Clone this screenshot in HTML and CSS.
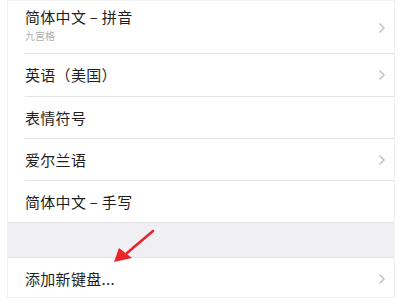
FILE: index.html
```html
<!DOCTYPE html>
<html lang="zh">
<head>
<meta charset="utf-8">
<link rel="stylesheet" href="styles.css">
</head>
<body>
<div class="screen">
  <div class="group">
    <div class="row row-tall">
      <div class="texts">
        <div class="title">简体中文 – 拼音</div>
        <div class="sub">九宫格</div>
      </div>
      <svg class="chev" width="8" height="12" viewBox="0 0 8 12"><path d="M1.5 1.5 L6 6 L1.5 10.5" fill="none" stroke="#c3c3c8" stroke-width="1.6"/></svg>
    </div>
    <div class="row row-2">
      <div class="title">英语（美国）</div>
      <svg class="chev" width="8" height="12" viewBox="0 0 8 12"><path d="M1.5 1.5 L6 6 L1.5 10.5" fill="none" stroke="#c3c3c8" stroke-width="1.6"/></svg>
    </div>
    <div class="row">
      <div class="title">表情符号</div>
    </div>
    <div class="row">
      <div class="title">爱尔兰语</div>
      <svg class="chev" width="8" height="12" viewBox="0 0 8 12"><path d="M1.5 1.5 L6 6 L1.5 10.5" fill="none" stroke="#c3c3c8" stroke-width="1.6"/></svg>
    </div>
    <div class="row last">
      <div class="title">简体中文 – 手写</div>
    </div>
  </div>
  <div class="gap"></div>
  <div class="group bottom">
    <div class="row last">
      <div class="title">添加新键盘...</div>
      <svg class="chev" width="8" height="12" viewBox="0 0 8 12"><path d="M1.5 1.5 L6 6 L1.5 10.5" fill="none" stroke="#c3c3c8" stroke-width="1.6"/></svg>
    </div>
  </div>
  <svg class="arrow" width="60" height="50" viewBox="0 0 60 50">
    <line x1="46" y1="4" x2="20" y2="26" stroke="#e8262b" stroke-width="2.6" stroke-linecap="round"/>
    <polygon points="7,35 12,21 25,31" fill="#e8262b"/>
  </svg>
</div>
</body>
</html>
```
FILE: styles.css
```css
html, body {
  margin: 0;
  padding: 0;
  background: #ffffff;
}
body {
  font-family: "Noto Sans CJK SC", "Noto Sans", sans-serif;
  color: #1f1f1f;
}
.screen {
  position: relative;
  margin-left: 7px;
  width: 388px;
  height: 298px;
  border-left: 1px solid #f1f1f1;
  border-right: 1px solid #f1f1f1;
  border-bottom: 1px solid #f0f0f0;
  box-sizing: border-box;
}
.group {
  padding-left: 17px;
  border-top: 1px solid #f2f2f2;
}
.group.bottom {
  border-top: 1px solid #e2e2e2;
}
.row {
  height: 41px;
  display: flex;
  align-items: center;
  justify-content: space-between;
  padding-right: 8px;
  border-bottom: 1px solid #e4e4e4;
}
.row-2 {
  height: 42px;
}
.row.last {
  border-bottom: none;
}
.row-tall {
  height: 52px;
  align-items: flex-start;
}
.row-tall .texts {
  padding-top: 6px;
}
.row-tall .chev {
  margin-top: 21px;
}
.title {
  font-size: 15px;
  line-height: 20px;
  letter-spacing: 0.3px;
}
.sub {
  font-size: 10px;
  line-height: 14px;
  color: #b0b0b0;
  margin-top: 2px;
}
.chev {
  display: block;
}
.gap {
  height: 34px;
  background: #efeff4;
  border-top: 1px solid #e2e2e2;
}
.arrow {
  position: absolute;
  left: 99px;
  top: 227px;
}
```
